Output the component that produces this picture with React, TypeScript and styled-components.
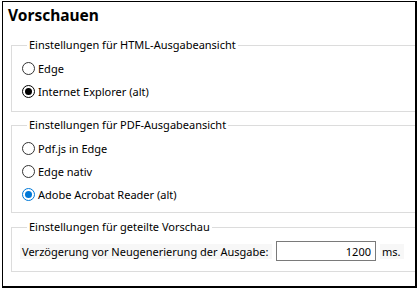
import React from "react";
import styled, { createGlobalStyle } from "styled-components";

const Global = createGlobalStyle`
  html, body {
    margin: 0;
    padding: 0;
    background: #ffffff;
  }
  body {
    font-family: "Noto Sans", "Open Sans", sans-serif;
    font-size: 11px;
    color: #000000;
  }
`;

const Frame = styled.div`
  margin: 1px 0 0 2px;
  width: 412px;
  height: 284px;
  border: 1px solid #000;
  border-right-width: 2px;
  border-bottom-width: 2px;
  overflow: hidden;
  display: flex;
  flex-direction: column;
`;

const Title = styled.h1`
  margin: 0;
  padding: 1px 0 0 5px;
  height: 24px;
  font-size: 15.5px;
  font-weight: 700;
  line-height: 24px;
  color: #000;
`;

const Groups = styled.div`
  display: flex;
  flex-direction: column;
  padding: 11px 0 0 8px;
`;

const Group = styled.fieldset<{ $pb: number; $gapAbove?: number }>`
  margin: ${(p) => p.$gapAbove ?? 0}px -4px 0 0;
  padding: 5px 0 ${(p) => p.$pb}px 10px;
  border: 1px solid #dcdcdc;
  min-width: 0;
`;

const Legend = styled.legend`
  margin-left: 5px;
  padding: 0 2px;
  height: 14px;
  line-height: 14px;
  font-size: 11px;
`;

const RadioRow = styled.label`
  display: flex;
  align-items: center;
  gap: 3px;
  height: 23px;
`;

const Circle = styled.span<{ $checked?: boolean; $accent?: string }>`
  width: 13px;
  height: 13px;
  box-sizing: border-box;
  border-radius: 50%;
  border: 1px solid ${(p) => (p.$checked ? p.$accent ?? "#000" : "#333")};
  background: #fff;
  display: flex;
  align-items: center;
  justify-content: center;
  flex: none;

  &::after {
    content: "";
    width: 7px;
    height: 7px;
    border-radius: 50%;
    background: ${(p) => (p.$checked ? p.$accent ?? "#000" : "transparent")};
  }
`;

const FieldRow = styled.div`
  display: flex;
  align-items: center;
  height: 24px;
  margin-left: -2px;
  gap: 4px;
`;

const FieldLabel = styled.span<{ $w: number }>`
  background: #f7f7f7;
  width: ${(p) => p.$w}px;
  height: 15px;
  line-height: 15px;
  padding-left: 2px;
  box-sizing: border-box;
  white-space: nowrap;
  flex: none;
`;

const NumberBox = styled.input`
  width: 100px;
  height: 20px;
  box-sizing: border-box;
  border: 1px solid #7a7a7a;
  padding: 0 4px;
  font: inherit;
  text-align: right;
  color: #000;
  outline: none;
  flex: none;
`;

type Option = { label: string; checked?: boolean };

const RadioGroup = ({
  options,
  accent,
}: {
  options: Option[];
  accent?: string;
}) => (
  <>
    {options.map((o) => (
      <RadioRow key={o.label}>
        <Circle $checked={o.checked} $accent={accent} />
        {o.label}
      </RadioRow>
    ))}
  </>
);

const App = () => {
  return (
    <>
      <Global />
      <Frame>
        <Title>Vorschauen</Title>
        <Groups>
          <Group $pb={8}>
            <Legend>Einstellungen für HTML-Ausgabeansicht</Legend>
            <RadioGroup
              options={[
                { label: "Edge" },
                { label: "Internet Explorer (alt)", checked: true },
              ]}
            />
          </Group>
          <Group $pb={6} $gapAbove={6}>
            <Legend>Einstellungen für PDF-Ausgabeansicht</Legend>
            <RadioGroup
              accent="#0078d7"
              options={[
                { label: "Pdf.js in Edge" },
                { label: "Edge nativ" },
                { label: "Adobe Acrobat Reader (alt)", checked: true },
              ]}
            />
          </Group>
          <Group $pb={8} $gapAbove={7}>
            <Legend>Einstellungen für geteilte Vorschau</Legend>
            <FieldRow>
              <FieldLabel $w={252}>
                Verzögerung vor Neugenerierung der Ausgabe:
              </FieldLabel>
              <NumberBox defaultValue="1200" readOnly />
              <FieldLabel $w={24}>ms.</FieldLabel>
            </FieldRow>
          </Group>
        </Groups>
      </Frame>
    </>
  );
};

export default App;
